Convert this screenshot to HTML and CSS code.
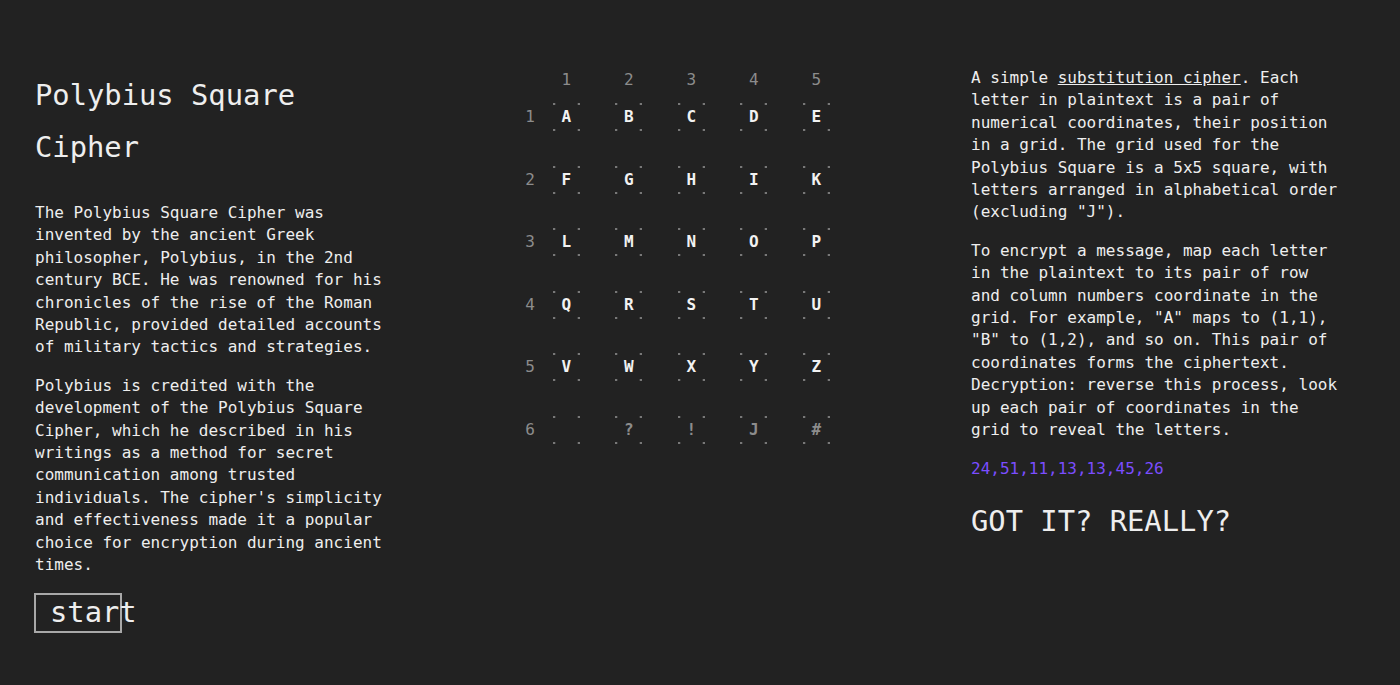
FILE: index.html
```html
<!DOCTYPE html>
<html lang="en">
<head>
<meta charset="utf-8">
<title>Polybius Square Cipher</title>
<link rel="stylesheet" href="styles.css">
</head>
<body>
<main class="page">
  <section class="intro">
    <h1 class="title">Polybius Square Cipher</h1>
    <p class="text">The Polybius Square Cipher was invented by the ancient Greek philosopher, Polybius, in the 2nd century BCE. He was renowned for his chronicles of the rise of the Roman Republic, provided detailed accounts of military tactics and strategies.</p>
    <p class="text">Polybius is credited with the development of the Polybius Square Cipher, which he described in his writings as a method for secret communication among trusted individuals. The cipher's simplicity and effectiveness made it a popular choice for encryption during ancient times.</p>
    <button class="start">start</button>
  </section>

  <section class="square-wrap">
    <div class="square">
      <div class="srow head">
        <span class="lab"></span>
        <span class="num">1</span><span class="num">2</span><span class="num">3</span><span class="num">4</span><span class="num">5</span>
      </div>
      <div class="srow">
        <span class="lab">1</span>
        <span class="slot"><span class="cell">A</span></span><span class="slot"><span class="cell">B</span></span><span class="slot"><span class="cell">C</span></span><span class="slot"><span class="cell">D</span></span><span class="slot"><span class="cell">E</span></span>
      </div>
      <div class="srow">
        <span class="lab">2</span>
        <span class="slot"><span class="cell">F</span></span><span class="slot"><span class="cell">G</span></span><span class="slot"><span class="cell">H</span></span><span class="slot"><span class="cell">I</span></span><span class="slot"><span class="cell">K</span></span>
      </div>
      <div class="srow">
        <span class="lab">3</span>
        <span class="slot"><span class="cell">L</span></span><span class="slot"><span class="cell">M</span></span><span class="slot"><span class="cell">N</span></span><span class="slot"><span class="cell">O</span></span><span class="slot"><span class="cell">P</span></span>
      </div>
      <div class="srow">
        <span class="lab">4</span>
        <span class="slot"><span class="cell">Q</span></span><span class="slot"><span class="cell">R</span></span><span class="slot"><span class="cell">S</span></span><span class="slot"><span class="cell">T</span></span><span class="slot"><span class="cell">U</span></span>
      </div>
      <div class="srow">
        <span class="lab">5</span>
        <span class="slot"><span class="cell">V</span></span><span class="slot"><span class="cell">W</span></span><span class="slot"><span class="cell">X</span></span><span class="slot"><span class="cell">Y</span></span><span class="slot"><span class="cell">Z</span></span>
      </div>
      <div class="srow">
        <span class="lab">6</span>
        <span class="slot"><span class="cell dim"> </span></span><span class="slot"><span class="cell dim">?</span></span><span class="slot"><span class="cell dim">!</span></span><span class="slot"><span class="cell dim">J</span></span><span class="slot"><span class="cell dim">#</span></span>
      </div>
    </div>
  </section>

  <section class="about">
    <p class="text">A simple <a class="link" href="#">substitution cipher</a>. Each letter in plaintext is a pair of numerical coordinates, their position in a grid. The grid used for the Polybius Square is a 5x5 square, with letters arranged in alphabetical order (excluding "J").</p>
    <p class="text">To encrypt a message, map each letter in the plaintext to its pair of row and column numbers coordinate in the grid. For example, "A" maps to (1,1), "B" to (1,2), and so on. This pair of coordinates forms the ciphertext. Decryption: reverse this process, look up each pair of coordinates in the grid to reveal the letters.</p>
    <p class="text code">24,51,11,13,13,45,26</p>
    <h2 class="challenge">GOT IT? REALLY?</h2>
  </section>
</main>
</body>
</html>
```

FILE: styles.css
```css
html, body {
  margin: 0;
  padding: 0;
  background: #222222;
  color: #eeeeee;
  font-family: "DejaVu Sans Mono", "Liberation Mono", monospace;
  font-size: 16px;
  line-height: 22.4px;
}

.page {
  display: grid;
  grid-template-columns: 370px 1fr 374px;
  padding: 67px 55px 0 35px;
  height: 685px;
  box-sizing: border-box;
}

.intro {
  padding-top: 2px;
}

.title {
  margin: 0 0 29px 0;
  font-size: 28.8px;
  line-height: 52px;
  font-weight: normal;
  width: 300px;
}

.text {
  margin: 0 0 16px 0;
}

.intro .text:last-of-type {
  margin-bottom: 16px;
}

.start {
  display: block;
  width: 88px;
  height: 40px;
  margin-left: -1px;
  padding: 0 0 2px 14px;
  background: transparent;
  border: 2px solid #a8a8a8;
  color: #eeeeee;
  font-family: "DejaVu Sans Mono", "Liberation Mono", monospace;
  font-size: 28.8px;
  line-height: 32px;
  text-align: left;
  white-space: nowrap;
  overflow: visible;
  box-sizing: border-box;
}

.square-wrap {
  display: flex;
  justify-content: flex-start;
  padding-left: 84px;
  padding-top: 2px;
}

.square {
  display: flex;
  flex-direction: column;
}

.srow {
  display: grid;
  grid-template-columns: 46px repeat(5, 62.5px);
  align-items: center;
  height: 26px;
  margin-top: 36.5px;
}

.srow.head {
  height: 22.4px;
  margin-top: 0;
  margin-bottom: -24.8px;
}

.srow.head + .srow {
  margin-top: 37.8px;
}

.lab {
  text-align: right;
  color: #8c8c8c;
}

.num {
  text-align: center;
  color: #8c8c8c;
}

.slot {
  display: flex;
  justify-content: center;
}

.cell {
  display: flex;
  align-items: center;
  justify-content: center;
  width: 27px;
  height: 28px;
  margin: -1px 0;
  font-weight: bold;
  color: #f2f2f2;
  white-space: pre;
  background-image: radial-gradient(circle at center, #a0a0a0 0, #a0a0a0 0.8px, rgba(160,160,160,0) 1.3px);
  background-size: 25px 26px;
  background-position: -11.5px -12px;
}

.cell.dim {
  color: #8c8c8c;
}

.about .text {
  margin-bottom: 16px;
}

.link {
  color: #eeeeee;
  text-decoration: underline;
}

.code {
  color: #7b4dff;
}

.challenge {
  margin: 23px 0 0 0;
  font-size: 28.8px;
  line-height: 36px;
  font-weight: normal;
}
```
